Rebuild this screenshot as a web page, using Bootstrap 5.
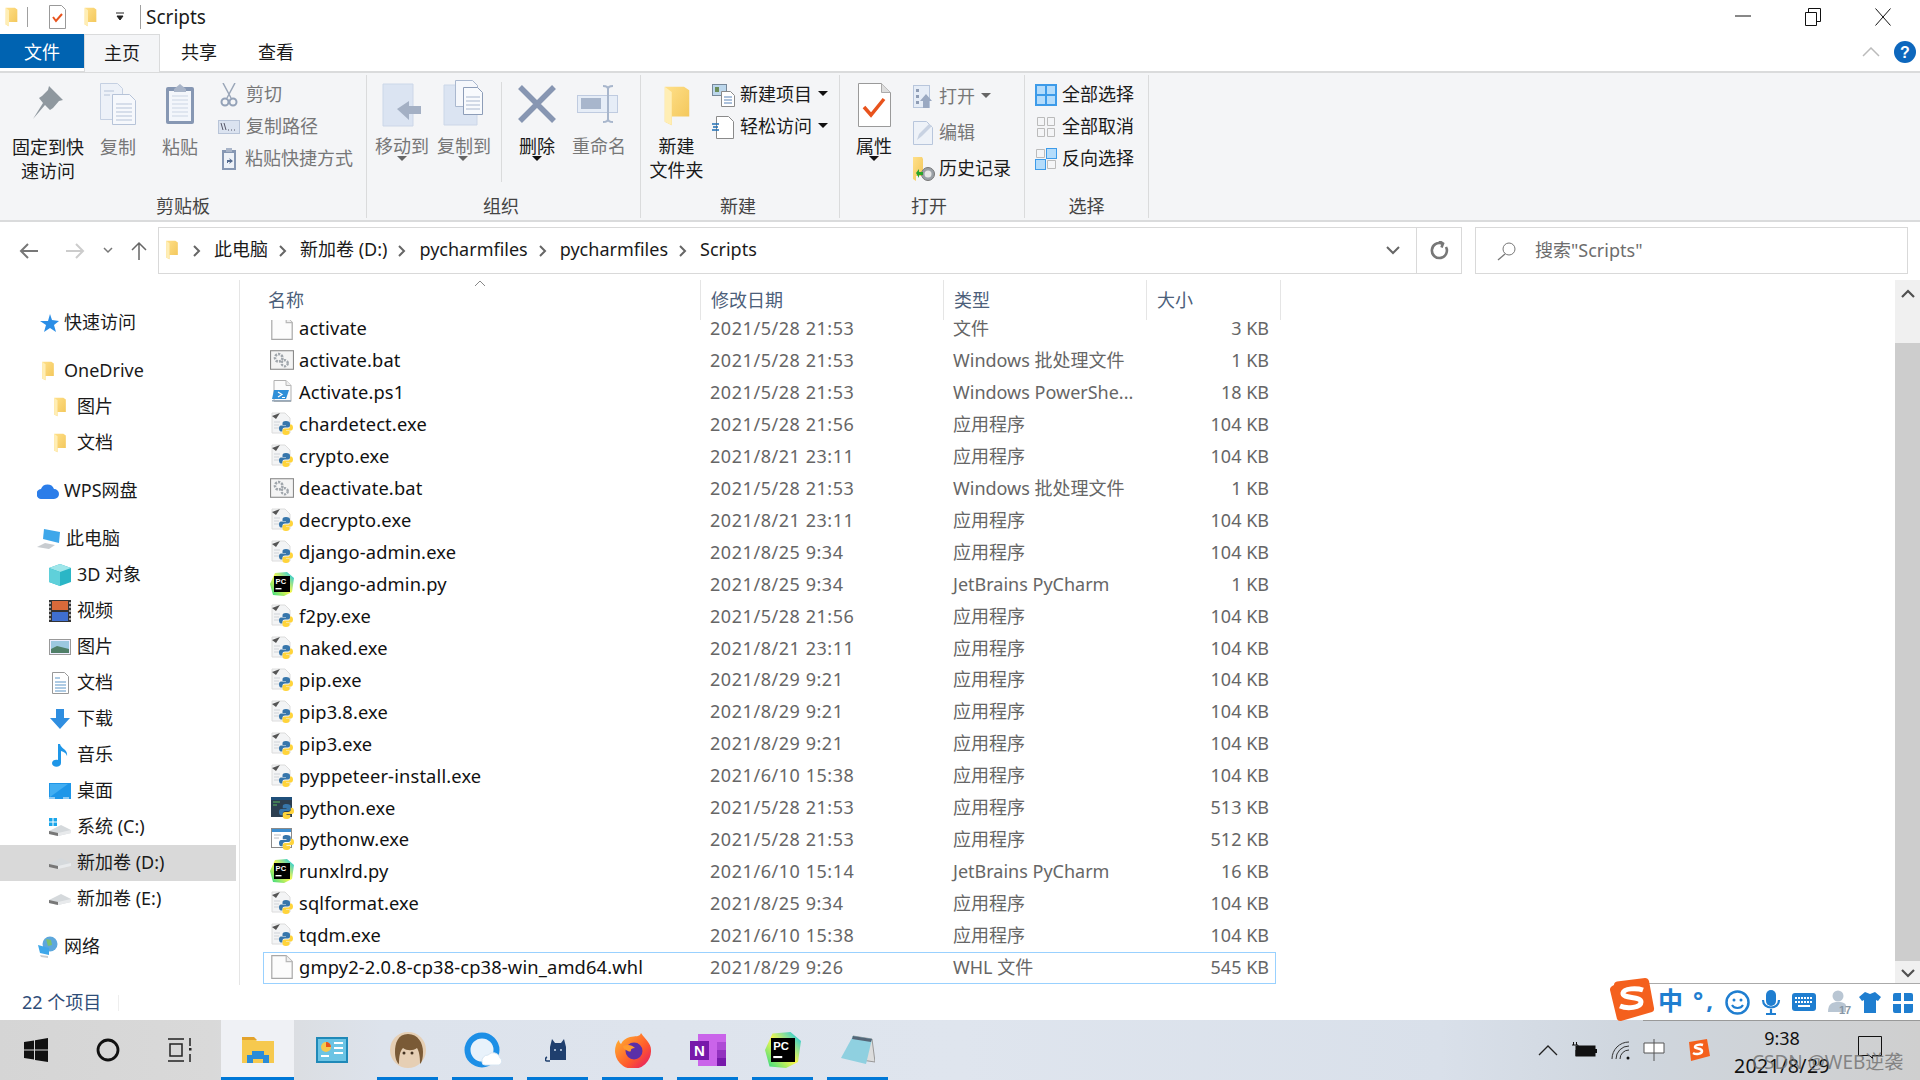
<!DOCTYPE html>
<html lang="zh-CN">
  <head>
    <meta charset="UTF-8" />
    <title>Scripts</title>
    <link href="https://cdn.jsdelivr.net/npm/bootstrap@5.3.0/dist/css/bootstrap.min.css" rel="stylesheet" />
    <style>
      html, body { height: 100%; }
      body {
        width: 1920px; height: 1080px; overflow: hidden; position: relative; background: #fff; color: #1a1a1a;
        font-family: "Noto Sans", "Noto Sans CJK SC", sans-serif; font-size: 18px; line-height: 1.2;
      }
      svg { display: block; flex: none; }
      .svg-defs { position: absolute; }
      /* title + tabs */
      .title-bar { height: 34px; }
      .title-text { font-size: 19px; margin-left: 5px; }
      .qa-sep { width: 1px; height: 20px; background: #a0a0a0; margin-left: 8px; }
      .qa-sep2 { height: 24px; margin-left: 15px; }
      .qa-check { margin-left: 21px; }
      .qa-folder { margin-left: 17px; }
      .qa-drop { margin-left: 17px; }
      .win-group { margin-right: 2px; }
      .win-btn { width: 70px; }
      .tab-strip { height: 37px; position: relative; z-index: 1; }
      .tab-item { width: 76px; height: 34px; line-height: 36px; text-align: center; }
      .tab-file { width: 84px; background: #0063b1; color: #fff; }
      .tab-home { height: 38px; background: #f4f5f7; border: 1px solid #dadbdc; border-bottom: 0; }
      .tab-share { width: 78px; }
      .tab-tools { height: 36px; margin-right: 4px; gap: 14px; }
      /* ribbon */
      .ribbon { height: 151px; background: #f4f5f7; border-top: 2px solid #dadbdc; border-bottom: 2px solid #dadbdc; padding-top: 2px; }
      .rb-group { height: 143px; border-right: 1px solid #dadbdc; flex: none; position: relative; }
      .rb-body { height: 120px; }
      .rb-label { height: 23px; text-align: center; color: #444; line-height: 22px; }
      .rb-big { flex: none; text-align: center; line-height: 24px; white-space: nowrap; }
      .rb-icon-box { height: 60px; padding-top: 8px; }
      .box-5 { padding-top: 5px; }
      .box-10 { padding-top: 10px; }
      .lbl-up { margin-top: -1px; }
      .rb-caret { width: 0; height: 0; margin: -2px auto 0; border: 5px solid transparent; border-top-color: #666; border-bottom: 0; }
      .rb-caret.is-dark { border-top-color: #111; }
      .caret-side { display: inline-block; margin: 0 0 4px 0; }
      .rb-col { display: flex; flex-direction: column; flex: none; margin-top: 4px; }
      .rb-small { height: 32px; display: flex; align-items: center; gap: 6px; white-space: nowrap; }
      .rb-tall { height: 36px; }
      .txt-off { color: #777; }
      .rb-vsep { width: 1px; height: 100px; background: #dadbdc; margin: 7px 0 0; flex: none; }
      .bw-96 { width: 96px; } .bw-44 { width: 44px; } .bw-80 { width: 80px; } .bw-70 { width: 70px; }
      .bw-52 { width: 52px; } .bw-71 { width: 71px; } .bw-68 { width: 68px; } .bw-12 { width: 12px; flex: none; }
      .grp-1 { width: 367px; } .grp-2 { width: 274px; } .grp-3 { width: 199px; } .grp-4 { width: 185px; } .grp-5 { width: 124px; }
      .lbl-new { width: 194px; } .lbl-open { width: 178px; } .lbl-org { padding-right: 5px; }
      .ms-5px { margin-left: 5px; } .ms-10px { margin-left: 10px; }
      .nudge-1 { margin-left: -1px; } .nudge-2 { margin-left: -2px; } .nudge-p2 { margin-left: 2px; }
      .ico-path { margin-left: -2px; }
      .ico-paste { margin: 0 2px 0 1px; }
      /* address */
      .addr-row { height: 58px; padding-top: 5px; }
      .addr-nav { width: 158px; height: 47px; flex: none; }
      .nav-back { margin-left: 19px; }
      .nav-fwd { margin-left: 26px; }
      .nav-drop { margin-left: 18px; }
      .nav-up { margin-left: 18px; }
      .addr-box { width: 1304px; height: 47px; border: 1px solid #d9d9d9; flex: none; }
      .addr-path { padding: 0 0 2px 6px; }
      .path-gap { width: 3px; flex: none; }
      .path-sep { margin: 2px 13px 0 11px; }
      .addr-end { width: 45px; height: 100%; border-left: 1px solid #d9d9d9; }
      .search-box { width: 433px; height: 47px; margin-left: 13px; border: 1px solid #d9d9d9; color: #6d6d6d; padding-left: 21px; flex: none; }
      .search-text { margin-left: 18px; }
      /* nav pane */
      .main-area { height: 705px; }
      .nav-pane { width: 240px; flex: none; border-right: 1px solid #e5e5e5; padding-top: 25px; }
      .nav-row { height: 36px; display: flex; align-items: center; width: 236px; white-space: nowrap; }
      .nav-top { padding-left: 37px; gap: 5px; margin-top: 12px; }
      .nav-top:first-child { margin-top: 0; }
      .nav-sub { padding-left: 49px; gap: 6px; }
      .nav-on { background: #d9d9d9; }
      .pad-fold { padding: 0 4px; }
      /* file list */
      .file-list { flex: 1 1 auto; padding-left: 23px; }
      .file-cols { display: grid; grid-template-columns: 437px 243px 203px 130px; width: 1013px; }
      .list-head { height: 40px; margin-bottom: -7px; background: #fff; position: relative; z-index: 1; color: #4c607a; width: 1018px; grid-template-columns: 437px 243px 203px 135px; }
      .head-cell { padding: 10px 0 0 10px; border-left: 1px solid #e5e5e5; }
      .head-cell:first-child { padding-left: 5px; border-left: 0; position: relative; }
      .head-cell:last-child { border-right: 1px solid #e5e5e5; }
      .sort-mark { position: absolute; left: 211px; top: 0; }
      .file-row { height: 31.95px; align-items: center; white-space: nowrap; }
      .file-name { display: flex; align-items: center; gap: 5px; padding: 0 0 1px 7px; font-size: 18.3px; letter-spacing: .15px; color: #111; }
      .file-date, .file-type, .file-size { color: #666; padding-left: 10px; }
      .file-date { letter-spacing: .55px; }
      .file-size { text-align: right; padding-right: 7px; }
      .file-on { box-shadow: inset 0 0 0 1px #99d1ff; }
      .scroll-bar { width: 25px; flex: none; background: #f0f0f0; }
      .scroll-up { height: 30px; padding-bottom: 3px; }
      .scroll-thumb { height: 618px; background: #cdcdcd; margin-top: 33px; }
      .scroll-down { height: 24px; }
      /* status */
      .status-bar { height: 35px; padding-left: 22px; color: #2f4d78; }
      .status-sep { width: 1px; height: 16px; background: #eee; margin-left: 17px; }
      /* taskbar */
      .task-bar { height: 60px; background: linear-gradient(90deg, #d5d5d5 0, #d9d9d9 11%, #dde3ec 20%, #dfe5ee 50%, #d9e0ea 75%, #cfd6de 85%, #cfcfcf 100%); }
      .task-item { height: 60px; flex: none; display: flex; align-items: center; justify-content: center; }
      .task-w72 { width: 72px; }
      .task-view { width: 77px; padding-right: 5px; }
      .task-w76 { width: 76px; }
      .task-app { width: 61px; margin-right: 14px; border-bottom: 3px solid #0078d7; padding-top: 3px; }
      .task-first { margin-left: 7px; }
      .task-active { width: 73px; background: #eff1f5; border-bottom: 3px solid #0078d7; padding-top: 3px; }
      .tray-group { margin-right: 16px; }
      .tray-36 { width: 36px; } .tray-38 { width: 38px; } .tray-28 { width: 28px; } .tray-60 { width: 60px; } .tray-68 { width: 68px; }
      .tray-bell { margin-bottom: 4px; }
      .tray-clock { width: 108px; text-align: center; white-space: nowrap; line-height: 1; color: #111; padding-top: 9px; display: block; }
      .clock-time { margin-bottom: 9px; }
      .clock-date { font-size: 19.5px; letter-spacing: .4px; }
      /* overlays */
      .ime-bar { position: absolute; left: 1643px; top: 983px; width: 277px; height: 38px; background: #fff; border-top: 1px solid #aaa; border-bottom: 1px solid #999; }
      .ime-logo { position: absolute; left: 1609px; top: 978px; }
      .ime-item { position: absolute; top: 6px; }
      .ime-zh { position: absolute; left: 15px; top: 1px; font-size: 25px; font-weight: 700; color: #1f7ed0; line-height: 1.2; }
      .ime-punct { position: absolute; left: 50px; top: 2px; font-size: 24px; font-weight: 700; color: #1f7ed0; line-height: 1.2; letter-spacing: 3px; }
      .ime-smile { left: 82px; } .ime-mic { left: 118px; }
      .ime-keys { left: 149px; top: 9px; } .ime-user { left: 184px; }
      .ime-shirt { left: 216px; top: 8px; } .ime-grid { left: 250px; top: 9px; }
      .water-mark { position: absolute; left: 1752px; top: 1051px; font-size: 19px; color: rgba(110,110,110,.8); white-space: nowrap; }
    </style>
  </head>
  <body>
    <svg class="svg-defs" width="0" height="0">
      <defs>
        <linearGradient id="fg" x1="0" y1="0" x2="1" y2="1"><stop offset="0" stop-color="#ffe08a"/><stop offset="1" stop-color="#f2c557"/></linearGradient>
        <symbol id="i-folder" viewBox="0 0 16 24"><path d="M1 1h11l3 2v15H5v5l-4-2z" fill="url(#fg)"/><path d="M1 1l4 3v19l-4-2z" fill="#ffeeb5"/></symbol>
        <symbol id="i-blank" viewBox="0 0 18 20"><path d="M.5.5h12l5 5v14H.5z" fill="#fcfcfc" stroke="#a8a8a8"/><path d="M12.5.5v5h5" fill="#eee" stroke="#b8b8b8"/></symbol>
        <symbol id="i-bat" viewBox="0 0 22 20"><rect x=".5" y="1.5" width="21" height="17" fill="#f4f4f4" stroke="#8a8a8a"/><circle cx="8" cy="8" r="3.4" fill="none" stroke="#a0a6ac" stroke-width="2.4" stroke-dasharray="2 1"/><circle cx="13.5" cy="13" r="2.8" fill="none" stroke="#a0a6ac" stroke-width="2.2" stroke-dasharray="2 1"/></symbol>
        <symbol id="i-ps" viewBox="0 0 22 24"><path d="M3 .5h12l5 5v16H3z" fill="#fbfbfb" stroke="#b0b0b0"/><path d="M15 .5v5h5" fill="#eee" stroke="#b8b8b8"/><path d="M3 10h15l-3 9H1z" fill="#2f8fd8"/><path d="M7 12l4 2.5L7 17M11 17.5h3" fill="none" stroke="#fff" stroke-width="1.2"/><path d="M1 20h19v1.500H1z" fill="#9ab"/></symbol>
        <symbol id="i-snake" viewBox="0 0 14 14"><path d="M7 0c-3 0-3.500 1-3.500 2.500V4H7v.6H2C.5 4.600 0 6 0 7.500S.6 10.500 2 10.500h1.500V8.800c0-1.400 1-2.300 2.500-2.300h3c1 0 2-.8 2-2V2.500C11 1 9.800 0 7 0z" fill="#3776ab"/><path d="M7 14c3 0 3.500-1 3.500-2.500V10H7v-.6h5c1.500 0 2-1.400 2-2.900S13.400 3.500 12 3.500h-1v1.700c0 1.400-1 2.300-2.500 2.300h-3c-1 0-2 .8-2 2v2C3.500 13 4.200 14 7 14z" fill="#ffd43b"/></symbol>
        <symbol id="i-pyexe" viewBox="0 0 24 24"><path d="M2 1h13l5 5v15H2z" fill="#f3f4f5" stroke="#dcdcdc"/><path d="M2 4l8-3-4 6z" fill="#555"/><path d="M4 10h6M4 13h5M4 16h5" stroke="#cfd3d8"/><use href="#i-snake" x="9" y="9" width="14" height="14"/></symbol>
        <symbol id="i-pycon" viewBox="0 0 24 24"><rect x="1" y="1" width="21" height="20" fill="#2c3e50"/><path d="M3 6h7M3 9h4" stroke="#5cb85c"/><rect x="1" y="1" width="21" height="3" fill="#1f4f7a"/><use href="#i-snake" x="9" y="8" width="15" height="15"/></symbol>
        <symbol id="i-pyw" viewBox="0 0 24 24"><rect x="1.500" y="1.500" width="20" height="19" fill="#fff" stroke="#8a8a8a"/><rect x="2" y="2" width="19" height="3" fill="#3d8fd1"/><path d="M4 8h7M4 11h5" stroke="#b8bcc2"/><use href="#i-snake" x="9" y="8" width="15" height="15"/></symbol>
        <linearGradient id="pcg" x1="0" y1="1" x2="1" y2="0"><stop offset="0" stop-color="#21d789"/><stop offset=".5" stop-color="#fcf84a"/><stop offset="1" stop-color="#07c3f2"/></linearGradient>
        <symbol id="i-pc" viewBox="0 0 24 24"><path d="M5 1l12-1 7 6-2 14-8 4-11-1-3-11z" fill="url(#pcg)"/><rect x="4" y="4" width="16" height="16" fill="#000"/><text x="5.500" y="12" font-family="Liberation Sans" font-weight="700" font-size="7.500" fill="#fff">PC</text><rect x="5.500" y="16" width="6" height="1.400" fill="#fff"/></symbol>
        <symbol id="i-drive" viewBox="0 0 22 12"><path d="M0 7l12-6 10 5v3L9 12l-9-2z" fill="#d5d9dc"/><path d="M0 7l9 2v3l-9-2z" fill="#777"/><path d="M9 9l13-3v3L9 12z" fill="#e8eaec"/></symbol>
      </defs>
    </svg>

    <div class="title-bar d-flex align-items-center">
      <svg class="ms-1" width="15" height="20"><use href="#i-folder"/></svg>
      <div class="qa-sep"></div>
      <svg class="qa-check" width="17" height="24" viewBox="0 0 17 24"><path d="M.5.5h12l4 4v19H.5z" fill="#fff" stroke="#999"/><path d="M4 12l3 4 6-7" fill="none" stroke="#e8531d" stroke-width="2"/></svg>
      <svg class="qa-folder" width="15" height="20"><use href="#i-folder"/></svg>
      <svg class="qa-drop" width="10" height="10" viewBox="0 0 10 10"><path d="M1 1h8M2 4h6l-3 4z" fill="#222" stroke="#222"/></svg>
      <div class="qa-sep qa-sep2"></div>
      <div class="title-text">Scripts</div>
      <div class="ms-auto d-flex win-group">
        <div class="win-btn d-flex justify-content-center"><svg width="16" height="16"><path d="M0 8h16" stroke="#111"/></svg></div>
        <div class="win-btn d-flex justify-content-center"><svg width="16" height="18"><path d="M.5 4.500h11v13H.5zM3.500 4V.5h12v13H12" fill="none" stroke="#111"/></svg></div>
        <div class="win-btn d-flex justify-content-center"><svg width="16" height="18"><path d="M.5.5l15 17M15.500.5l-15 17" stroke="#111"/></svg></div>
      </div>
    </div>

    <div class="tab-strip d-flex">
      <div class="tab-item tab-file">文件</div>
      <div class="tab-item tab-home">主页</div>
      <div class="tab-item tab-share">共享</div>
      <div class="tab-item">查看</div>
      <div class="ms-auto d-flex align-items-center tab-tools">
        <svg width="18" height="10"><path d="M1 9l8-8 8 8" fill="none" stroke="#bbb" stroke-width="1.500"/></svg>
        <svg width="22" height="22" viewBox="0 0 22 22"><circle cx="11" cy="11" r="11" fill="#0d67bd"/><text x="11" y="17" text-anchor="middle" font-family="Liberation Sans" font-weight="700" font-size="16" fill="#fff">?</text></svg>
      </div>
    </div>

    <div class="ribbon d-flex">
      <div class="rb-group grp-1">
        <div class="rb-body d-flex">
          <div class="rb-big bw-96">
            <div class="rb-icon-box"><svg class="mx-auto" width="36" height="38" viewBox="0 0 36 38"><path d="M19 3l14 14-4 1-6 7-3 2-5-5-12 14 10-16-4-5 3-2 6-6z" fill="#8f989f"/></svg></div>
            <div>固定到快<br />速访问</div>
          </div>
          <div class="rb-big txt-off bw-44">
            <div class="rb-icon-box"><svg class="mx-auto" width="36" height="42" viewBox="0 0 36 42"><path d="M.5.500h17l5 5v31H.5z" fill="#edf1f8" stroke="#c5d0e2"/><path d="M12.500 11.500h17l6 6v24h-23z" fill="#f6f8fc" stroke="#b6c3d8"/><path d="M16 21h16M16 25h16M16 29h16M16 33h16M16 37h16M4 8h10M4 12h6" stroke="#b6c3d8"/></svg></div>
            <div>复制</div>
          </div>
          <div class="rb-big txt-off bw-80">
            <div class="rb-icon-box"><svg class="mx-auto" width="30" height="42" viewBox="0 0 30 42"><rect x="1" y="4" width="28" height="37" rx="2" fill="#8697b3"/><rect x="4" y="8" width="22" height="30" fill="#f3f6fb"/><path d="M7 13h16M7 17h16M7 21h16M7 25h16M7 29h16M7 33h16" stroke="#cbd5e4"/><path d="M9 6l6-5 6 5v3H9z" fill="#a8b4c8"/></svg></div>
            <div>粘贴</div>
          </div>
          <div class="rb-col txt-off">
            <div class="rb-small"><svg width="18" height="24" viewBox="0 0 18 24"><path d="M3 0l8 15M15 0L7 15" stroke="#9aa6b8" stroke-width="1.500"/><circle cx="5" cy="19" r="3.500" fill="none" stroke="#94a2b8" stroke-width="2"/><circle cx="13" cy="19" r="3.500" fill="none" stroke="#94a2b8" stroke-width="2"/></svg><span class="nudge-p2">剪切</span></div>
            <div class="rb-small"><svg class="ico-path" width="22" height="16" viewBox="0 0 22 16"><rect x=".5" y="1.500" width="21" height="13" fill="#dbe3f0" stroke="#b8c4d8"/><path d="M3 4l2 7M6 4l2 7" stroke="#556"/><path d="M10 11h1M13 11h1M16 11h1" stroke="#556"/></svg><span>复制路径</span></div>
            <div class="rb-small"><svg class="ico-paste" width="16" height="24" viewBox="0 0 16 24"><rect x="1" y="3" width="14" height="20" fill="#8697b3"/><rect x="3" y="6" width="10" height="15" fill="#eef2f8"/><path d="M6 16v-3h3l-1-2 4 3-4 3 1-2H7v1z" fill="#556b8f"/><rect x="5" y="1" width="6" height="4" fill="#a8b4c8"/></svg><span>粘贴快捷方式</span></div>
          </div>
        </div>
        <div class="rb-label">剪贴板</div>
      </div>

      <div class="rb-group grp-2">
        <div class="rb-body d-flex">
          <div class="rb-big txt-off bw-70">
            <div class="rb-icon-box"><svg class="mx-auto" width="40" height="44" viewBox="0 0 40 44"><path d="M1 1h30v42H1z" fill="#dbe4f2" stroke="#ccd7e8"/><path d="M15 26l12-8v5h12v8H27v6z" fill="#a4b0c4"/></svg></div>
            <div class="lbl-up">移动到</div><div class="rb-caret"></div>
          </div>
          <div class="rb-big txt-off bw-52">
            <div class="rb-icon-box box-5"><svg class="mx-auto" width="40" height="46" viewBox="0 0 40 46"><path d="M1 5h33v40H1z" fill="#dbe4f2" stroke="#ccd7e8"/><path d="M12.500.5h17l5 5v21h-22z" fill="#f5f7fb" stroke="#aab8cf"/><path d="M20.500 7.500h14l5 5v22h-19z" fill="#f8fafd" stroke="#8d9db8"/><path d="M23 17h14M23 21h14M23 25h14M23 29h14" stroke="#aab8cf"/></svg></div>
            <div class="lbl-up">复制到</div><div class="rb-caret"></div>
          </div>
          <div class="bw-12"></div>
          <div class="rb-vsep"></div>
          <div class="rb-big bw-70">
            <div class="rb-icon-box box-10"><svg class="mx-auto" width="38" height="38" viewBox="0 0 38 38"><path d="M2 2l34 34M36 2L2 36" stroke="#8796b2" stroke-width="5.500"/></svg></div>
            <div class="lbl-up">删除</div><div class="rb-caret is-dark"></div>
          </div>
          <div class="rb-big txt-off bw-52">
            <div class="rb-icon-box box-10"><svg class="mx-auto" width="42" height="38" viewBox="0 0 42 38"><rect x=".5" y="10.500" width="40" height="17" fill="#e6edf7" stroke="#bfcbe0"/><rect x="4" y="13" width="20" height="11" fill="#a8b6cc"/><path d="M26 1c3 0 5 1 5 3v30c0 2 2 3 5 3M36 1c-3 0-5 1-5 3M26 37c3 0 5-1 5-3" fill="none" stroke="#a8b6cc" stroke-width="2"/></svg></div>
            <div class="lbl-up">重命名</div>
          </div>
        </div>
        <div class="rb-label lbl-org">组织</div>
      </div>

      <div class="rb-group grp-3">
        <div class="rb-body d-flex">
          <div class="rb-big bw-71">
            <div class="rb-icon-box box-10"><svg class="mx-auto" width="28" height="42"><use href="#i-folder"/></svg></div>
            <div class="lbl-up">新建<br />文件夹</div>
          </div>
          <div class="rb-col">
            <div class="rb-small"><svg width="23" height="23" viewBox="0 0 23 23"><rect x=".5" y=".5" width="14" height="11" fill="#bcd7ec" stroke="#789"/><rect x="3" y="3" width="4" height="5" fill="#6b8e5a"/><path d="M9.500 7.500h9l4 4v11h-13z" fill="#fff" stroke="#8a8a8a"/><path d="M12 13h8M12 16h8M12 19h8" stroke="#5a84b8"/></svg><span class="nudge-1">新建项目</span><span class="rb-caret is-dark caret-side"></span></div>
            <div class="rb-small"><svg width="22" height="23" viewBox="0 0 22 23"><path d="M4.500.5h12l5 5v17h-17z" fill="#fff" stroke="#8a8a8a"/><path d="M0 8h7M1 11h5M0 14h7" stroke="#1f6fb5" stroke-width="1.300"/></svg><span>轻松访问</span><span class="rb-caret is-dark caret-side"></span></div>
          </div>
        </div>
        <div class="rb-label lbl-new">新建</div>
      </div>

      <div class="rb-group grp-4">
        <div class="rb-body d-flex">
          <div class="rb-big bw-68">
            <div class="rb-icon-box"><svg class="mx-auto" width="33" height="44" viewBox="0 0 33 44"><path d="M.5.500h23l9 9v34H.5z" fill="#fff" stroke="#9a9a9a"/><path d="M23.500.5v9h9" fill="#ddd" stroke="#aaa"/><path d="M6 24l7 8 13-16" fill="none" stroke="#e8531d" stroke-width="3.500"/></svg></div>
            <div class="lbl-up">属性</div><div class="rb-caret is-dark"></div>
          </div>
          <div class="rb-col ms-5px">
            <div class="rb-small rb-tall txt-off"><svg width="20" height="24" viewBox="0 0 20 24"><rect x=".5" y=".5" width="16" height="22" fill="#e6edf7" stroke="#b8c6dc"/><path d="M3 4h3v3H3zM3 10h3v3H3zM3 16h3v3H3z" fill="#8f9db5"/><path d="M13 9l6 7h-3v7h-6v-7H7z" fill="#9aa9c2"/></svg><span>打开</span><span class="rb-caret caret-side"></span></div>
            <div class="rb-small rb-tall txt-off"><svg width="20" height="24" viewBox="0 0 20 24"><path d="M.5.500h13l6 6v17H.5z" fill="#eef2f8" stroke="#b8c6dc"/><path d="M4 19l2-6 10-10 3 2-10 10z" fill="#c8d2e2"/></svg><span>编辑</span></div>
            <div class="rb-small rb-tall"><svg width="22" height="24" viewBox="0 0 22 24"><path d="M0 0h9l1 2v17H3v5l-3-2z" fill="url(#fg)"/><circle cx="15" cy="17" r="6.500" fill="#9aa0a6" stroke="#777"/><circle cx="15" cy="17" r="3.500" fill="#e5e5e5"/><path d="M3 16l3-4v3h4v3H6v3z" fill="#2aa52a"/></svg><span class="nudge-2">历史记录</span></div>
          </div>
        </div>
        <div class="rb-label lbl-open">打开</div>
      </div>

      <div class="rb-group grp-5">
        <div class="rb-body d-flex">
          <div class="rb-col ms-10px">
            <div class="rb-small"><svg width="22" height="22" viewBox="0 0 22 22"><rect width="22" height="22" fill="#3d9be9"/><path d="M2 2h8v8H2zM12 2h8v8h-8zM2 12h8v8H2zM12 12h8v8h-8z" fill="#b4dcfb"/></svg><span class="nudge-1">全部选择</span></div>
            <div class="rb-small"><svg width="22" height="22" viewBox="0 0 22 22"><path d="M2.500 1.500h7v8h-7zM12.500 1.500h7v8h-7zM2.500 12.500h7v8h-7zM12.500 12.500h7v8h-7z" fill="#f4f5f7" stroke="#bbb"/></svg><span class="nudge-1">全部取消</span></div>
            <div class="rb-small"><svg width="22" height="22" viewBox="0 0 22 22"><path d="M11 0h11v11H11zM0 11h11v11H0z" fill="#3d9be9"/><path d="M12 1h9v9h-9zM1 12h9v9H1z" fill="#b4dcfb"/><path d="M1.500 1.500h8v8h-8zM12.500 12.500h8v8h-8z" fill="#f4f5f7" stroke="#bbb"/></svg><span class="nudge-1">反向选择</span></div>
          </div>
        </div>
        <div class="rb-label">选择</div>
      </div>
    </div>

    <div class="addr-row d-flex">
      <div class="addr-nav d-flex align-items-center">
        <svg class="nav-back" width="20" height="16" viewBox="0 0 20 16"><path d="M19 8H2M9 1L2 8l7 7" fill="none" stroke="#777" stroke-width="2"/></svg>
        <svg class="nav-fwd" width="20" height="16" viewBox="0 0 20 16"><path d="M1 8h17M11 1l7 7-7 7" fill="none" stroke="#ccc" stroke-width="2"/></svg>
        <svg class="nav-drop" width="10" height="8" viewBox="0 0 10 8"><path d="M1 1l4 4 4-4" fill="none" stroke="#777" stroke-width="1.500"/></svg>
        <svg class="nav-up" width="16" height="20" viewBox="0 0 16 20"><path d="M8 19V2M1 9l7-7 7 7" fill="none" stroke="#666" stroke-width="1.500"/></svg>
      </div>
      <div class="addr-box d-flex align-items-center">
        <div class="addr-path d-flex align-items-center flex-grow-1" id="addr-path"></div>
        <svg class="me-3" width="14" height="9" viewBox="0 0 14 9"><path d="M1 1l6 6 6-6" fill="none" stroke="#666" stroke-width="2"/></svg>
        <div class="addr-end d-flex align-items-center justify-content-center">
          <svg width="20" height="20" viewBox="0 0 20 20"><path d="M17 6a7.500 7.500 0 1 1-4-3.500M10 0l4 2.500-1.500 4" fill="none" stroke="#777" stroke-width="2.600"/></svg>
        </div>
      </div>
      <div class="search-box d-flex align-items-center">
        <svg width="20" height="20" viewBox="0 0 20 20"><circle cx="12" cy="8" r="6" fill="none" stroke="#777"/><path d="M8 13l-7 6" stroke="#777" stroke-width="1.300"/></svg>
        <span class="search-text">搜索"Scripts"</span>
      </div>
    </div>

    <div class="main-area d-flex">
      <div class="nav-pane" id="nav-pane"></div>
      <div class="file-list">
        <div class="file-cols list-head">
          <div class="head-cell">名称<svg class="sort-mark" width="12" height="7"><path d="M1 6l5-5 5 5" fill="none" stroke="#888"/></svg></div>
          <div class="head-cell">修改日期</div>
          <div class="head-cell">类型</div>
          <div class="head-cell">大小</div>
        </div>
        <div id="file-rows"></div>
      </div>
      <div class="scroll-bar d-flex flex-column">
        <div class="scroll-up d-flex justify-content-center align-items-center"><svg width="14" height="9" viewBox="0 0 14 9"><path d="M1 8l6-6 6 6" fill="none" stroke="#505050" stroke-width="2.200"/></svg></div>
        <div class="scroll-thumb"></div>
        <div class="scroll-down d-flex justify-content-center align-items-center"><svg width="14" height="9" viewBox="0 0 14 9"><path d="M1 1l6 6 6-6" fill="none" stroke="#505050" stroke-width="2.200"/></svg></div>
      </div>
    </div>

    <div class="status-bar d-flex align-items-center">22 个项目<div class="status-sep"></div></div>

    <div class="task-bar d-flex">
      <div class="task-item task-w72"><svg width="24" height="24" viewBox="0 0 24 24"><path d="M0 4l10-1.500V11.500H0zM11 2.300L24 0v11.500H11zM0 12.500h10v9L0 20zM11 12.500h13V24l-13-2z" fill="#111"/></svg></div>
      <div class="task-item task-w72"><svg width="24" height="24"><circle cx="12" cy="12" r="10" fill="none" stroke="#111" stroke-width="2.800"/></svg></div>
      <div class="task-item task-view"><svg width="24" height="24" viewBox="0 0 24 24"><path d="M0 1h16M2 6h12v12H2zM0 23h16M22 0v8M22 16v8" fill="none" stroke="#222" stroke-width="1.500"/><rect x="21" y="10" width="2.500" height="2.500" fill="#222"/></svg></div>
      <div class="task-item task-active"><svg width="32" height="26" viewBox="0 0 32 26"><path d="M0 1h12l3 3h17v22H0z" fill="#f6c94e"/><path d="M0 0h12l3 3H0z" fill="#e3a32b"/><path d="M5 26v-8h5v-4h12v4h5v8h-6v-4H11v4z" fill="#2a8cd8"/></svg></div>
      <div class="task-item task-w76"><svg width="32" height="26" viewBox="0 0 32 26"><rect width="32" height="26" fill="#1f89b8"/><rect x="2" y="2" width="28" height="22" fill="#6cc4e4"/><circle cx="10" cy="10" r="5" fill="#f6c94e"/><path d="M10 10V5a5 5 0 0 1 5 5z" fill="#e8531d"/><path d="M18 6h9M18 11h9M18 16h9M5 19h8" stroke="#fff" stroke-width="2"/></svg></div>
      <div class="task-item task-app task-first"><svg width="36" height="36" viewBox="0 0 36 36"><circle cx="18" cy="18" r="18" fill="#e6cfb4"/><path d="M18 2C8 2 5 11 5 20c0 6 2 11 4 12 0-8 1-13 4-16 4 3 10 3 14 0 2 3 3 8 3 16 2-2 3-6 3-12C33 11 28 2 18 2z" fill="#7a5a36"/><circle cx="14" cy="21" r="1.500" fill="#432"/><circle cx="22" cy="21" r="1.500" fill="#432"/></svg></div>
      <div class="task-item task-app"><svg width="38" height="36" viewBox="0 0 38 36"><circle cx="18" cy="18" r="14.500" fill="#e8f2fb" stroke="#1d8fe6" stroke-width="6"/><path d="M18 30a6 6 0 0 1 6-7 7 7 0 0 1 12 3 4 4 0 0 1-1 7H21a3 3 0 0 1-3-3z" fill="#fff" stroke="#d8e6f2"/></svg></div>
      <div class="task-item task-app"><svg width="26" height="26" viewBox="0 0 26 26"><path d="M7 2l3 4h6l3-4 2 8v13H5V10z" fill="#1f3f6e"/><circle cx="10" cy="13" r="1" fill="#cde"/><circle cx="16" cy="13" r="1" fill="#cde"/><path d="M5 24H2c-2 0-2-3 0-4" fill="none" stroke="#1f3f6e" stroke-width="1.500"/></svg></div>
      <div class="task-item task-app"><svg width="36" height="36" viewBox="0 0 36 36"><defs><linearGradient id="ffg" x1="0" y1="0" x2="1" y2="1"><stop offset="0" stop-color="#ffbd30"/><stop offset=".6" stop-color="#ff5a2c"/><stop offset="1" stop-color="#e0106e"/></linearGradient></defs><path d="M26 1c4 6 10 10 10 17a18 18 0 1 1-35-5c1-3 2-4 3-5 0 2 1 3 2 4 2-4 5-6 9-7 5-1 10 0 11-4z" fill="url(#ffg)"/><circle cx="19" cy="19" r="8.500" fill="#5b2fa8"/><path d="M8 14c5-2 9-1 12 2-3 0-4 1-4 2 0 3-3 1-5 0-2-1-3-2-3-4z" fill="#ff9a2e"/></svg></div>
      <div class="task-item task-app"><svg width="36" height="32" viewBox="0 0 36 32"><rect x="8" y="0" width="28" height="32" fill="#ca64ea"/><rect x="27" y="8" width="9" height="8" fill="#ae4bd5"/><rect x="27" y="16" width="9" height="8" fill="#9332bf"/><rect x="27" y="24" width="9" height="8" fill="#7719aa"/><rect x="0" y="7" width="19" height="19" fill="#7719aa"/><text x="9.500" y="22" text-anchor="middle" font-family="Liberation Sans" font-weight="700" font-size="15" fill="#fff">N</text></svg></div>
      <div class="task-item task-app"><svg width="36" height="36"><use href="#i-pc"/></svg></div>
      <div class="task-item task-app"><svg width="34" height="32" viewBox="0 0 34 32"><path d="M12 2l19 3 3 23-20-3z" fill="#ddd" stroke="#999"/><path d="M12 2l19 3-6 25L0 24z" fill="#8fd0e0"/><path d="M12 2l19 3-1 3-19-3z" fill="#567"/></svg></div>

      <div class="ms-auto d-flex tray-group">
        <div class="task-item tray-36"><svg width="20" height="11"><path d="M1 10l9-9 9 9" fill="none" stroke="#222" stroke-width="1.300"/></svg></div>
        <div class="task-item tray-36"><svg width="25" height="16" viewBox="0 0 25 16"><path d="M1.500 0v3M4.500 0v3M0 3h6v3l-2 2v6" fill="none" stroke="#111"/><rect x="4" y="4" width="19" height="10" fill="#111" stroke="#111"/><rect x="23" y="7" width="2" height="4" fill="#111"/></svg></div>
        <div class="task-item tray-38"><svg width="20" height="20" viewBox="0 0 20 20"><path d="M1 19A17 17 0 0 1 18 2M5 19A13 13 0 0 1 18 6M9 19a9 9 0 0 1 9-9" fill="none" stroke="#333"/><circle cx="17" cy="18" r="1.500" fill="#111"/></svg></div>
        <div class="task-item tray-28"><svg width="22" height="24" viewBox="0 0 22 24"><path d="M1 5h20v10H1zM11 1v22" fill="#fff" stroke="#555"/></svg></div>
        <div class="task-item tray-60"><svg width="24" height="22" viewBox="0 0 24 22"><path d="M3 3l18-3 3 17-19 5z" fill="#f4601d"/><path d="M17 6c-3-1-8 0-8 2s7 1 7 4-6 4-9 2" fill="none" stroke="#fff" stroke-width="2.500"/></svg></div>
        <div class="task-item tray-clock"><div class="clock-time">9:38</div><div class="clock-date">2021/8/29</div></div>
        <div class="task-item tray-68"><svg class="tray-bell" width="24" height="24"><path d="M.5.5h23v19h-9v3l-3-3H.5z" fill="none" stroke="#111"/></svg></div>
      </div>
    </div>

    <!-- input method bar and watermark sit on top of everything -->
    <div class="ime-bar">
      <span class="ime-zh">中</span>
      <span class="ime-punct">°,</span>
      <svg class="ime-item ime-smile" width="25" height="25" viewBox="0 0 25 25"><circle cx="12.500" cy="12.500" r="11" fill="none" stroke="#1f7ed0" stroke-width="2.500"/><circle cx="9" cy="10" r="1.500" fill="#1f7ed0"/><circle cx="16" cy="10" r="1.500" fill="#1f7ed0"/><path d="M7 15c2 4 9 4 11 0" fill="none" stroke="#1f7ed0" stroke-width="2"/></svg>
      <svg class="ime-item ime-mic" width="20" height="25" viewBox="0 0 20 25"><rect x="5" y="0" width="10" height="16" rx="5" fill="#1f7ed0"/><path d="M2 10c0 10 16 10 16 0M10 19v4M5 24h10" fill="none" stroke="#1f7ed0" stroke-width="2.200"/></svg>
      <svg class="ime-item ime-keys" width="24" height="18" viewBox="0 0 24 18"><rect width="24" height="18" rx="3" fill="#1f7ed0"/><path d="M3 5h18M3 9h18" stroke="#fff" stroke-width="2" stroke-dasharray="2 1"/><path d="M6 13h12" stroke="#fff" stroke-width="2"/></svg>
      <svg class="ime-item ime-user" width="26" height="25" viewBox="0 0 26 25"><circle cx="11" cy="6" r="5.500" fill="#b9c6d3"/><path d="M1 22c0-8 4-10 10-10s8 2 8 4v6z" fill="#b9c6d3"/><text x="12" y="24" font-family="Liberation Sans" font-weight="700" font-size="11" fill="#8796a5">17</text></svg>
      <svg class="ime-item ime-shirt" width="22" height="21" viewBox="0 0 22 21"><path d="M6 0l5 2 5-2 6 5-3 4-2-1v13H5V8L3 9 0 5z" fill="#1f7ed0"/></svg>
      <svg class="ime-item ime-grid" width="20" height="20" viewBox="0 0 20 20"><path d="M0 2a2 2 0 0 1 2-2h6v8H0zM11 0h7a2 2 0 0 1 2 2v6h-9zM0 11h8v9H2a2 2 0 0 1-2-2zM11 11h9v7a2 2 0 0 1-2 2h-7z" fill="#1f7ed0"/></svg>
    </div>
    <svg class="ime-logo" width="46" height="44" viewBox="0 0 46 44"><path d="M5 7Q5 4 8 3.500L36 0q3 0 4 3l5 27q.5 3-2 4L12 43q-3 .5-4-2L1 12q-.5-3 4-5z" fill="#f4601d"/><path d="M34 12c-6-2-19-2-20 3-1 6 18 3 18 9s-14 7-21 4" fill="none" stroke="#fff" stroke-width="5"/></svg>
    <div class="water-mark">CSDN @WEB逆袭</div>

    <script>
      // nav pane entries: [level, icon svg, label]
      const folder = '<svg width="14" height="20"><use href="#i-folder"/></svg>';
      const drive = '<svg width="22" height="12"><use href="#i-drive"/></svg>';
      const padded = '<span class="pad-fold">' + folder + "</span>";
      const navItems = [
        [0, '<svg width="22" height="18" viewBox="0 0 22 18"><path d="M13 0l2 6 7 1-5 4 2 7-6-4-6 4 2-7-6-4h8z" fill="#2b8ee6"/></svg>', "快速访问"],
        [0, padded, "OneDrive"],
        [1, padded, "图片"],
        [1, padded, "文档"],
        [0, '<svg width="22" height="16" viewBox="0 0 22 16"><path d="M5 16a5 5 0 0 1-1-10 7 7 0 0 1 13 0 5 5 0 0 1 0 10z" fill="#2b7de9"/></svg>', "WPS网盘"],
        [0, '<svg width="24" height="20" viewBox="0 0 24 20"><path d="M7 0l16 3-1 11L6 10z" fill="#3ea7ea"/><path d="M0 18l8-4 10 2-6 4z" fill="#c8ccd0"/></svg>', "此电脑"],
        [1, '<svg width="22" height="22" viewBox="0 0 22 22"><path d="M11 0l11 4v14l-11 4L0 18V4z" fill="#2ab6c6"/><path d="M0 4l11 4 11-4-11-4z" fill="#9fe6ea"/><path d="M11 8v14L0 18V4z" fill="#5fd0da"/></svg>', "3D 对象"],
        [1, '<svg width="22" height="22" viewBox="0 0 22 22"><rect width="22" height="22" fill="#333"/><rect x="3" y="1" width="16" height="9" fill="#d86a3a"/><rect x="3" y="12" width="16" height="9" fill="#3f6fd0"/><path d="M1 2v18M21 2v18" stroke="#ccc" stroke-width="1.500" stroke-dasharray="2 2"/></svg>', "视频"],
        [1, '<svg width="22" height="16" viewBox="0 0 22 16"><rect x=".5" y=".5" width="21" height="15" fill="#eef" stroke="#999"/><rect x="2" y="2" width="18" height="12" fill="#9cc8e0"/><path d="M2 10l6-3 12 3v4H2z" fill="#4f7f68"/></svg>', "图片"],
        [1, '<svg width="22" height="22" viewBox="0 0 22 22"><path d="M3.500.5h12l4 4v17h-16z" fill="#fff" stroke="#999"/><path d="M6 6h5M6 10h11M6 13h11M6 16h11M6 19h11" stroke="#5f97c8"/></svg>', "文档"],
        [1, '<svg width="22" height="20" viewBox="0 0 22 20"><path d="M7 0h8v9h6L11 20 1 9h6z" fill="#2f8ee0"/></svg>', "下载"],
        [1, '<svg width="22" height="24" viewBox="0 0 22 24"><path d="M9 1h2c1 5 8 5 7 12-1-3-3-4-6-5v12c0 5-9 5-9 0 0-3 4-4 6-3z" fill="#1e96e8"/></svg>', "音乐"],
        [1, '<svg width="22" height="16" viewBox="0 0 22 16"><rect width="22" height="16" fill="#1e96e8"/><path d="M1 14L19 1H1z" fill="#42aef2"/><path d="M0 15h22" stroke="#fff" stroke-dasharray="6 8"/></svg>', "桌面"],
        [1, '<svg width="22" height="18" viewBox="0 0 22 18"><path d="M0 0h3.500v3.500H0zM4.500 0H8v3.500H4.500zM0 4.500h3.500V8H0zM4.500 4.500H8V8H4.500z" fill="#19a5ea"/><use href="#i-drive" y="6" width="22" height="12"/></svg>', "系统 (C:)"],
        [1, drive, "新加卷 (D:)", true],
        [1, drive, "新加卷 (E:)"],
        [0, '<svg width="22" height="22" viewBox="0 0 22 22"><circle cx="13" cy="8" r="7.500" fill="#5da7dc"/><path d="M9 3l5 1 1 5-4 1z" fill="#7cc070"/><path d="M1 9l11 3v7L3 17z" fill="#3ea7ea"/><path d="M3 19l8 1v2l-7-1z" fill="#c8ccd0"/></svg>', "网络"],
      ];
      document.getElementById("nav-pane").innerHTML = navItems
        .map(
          ([level, icon, label, on]) =>
            `<div class="nav-row ${level ? "nav-sub" : "nav-top"} ${on ? "nav-on" : ""}">${icon}<span>${label}</span></div>`
        )
        .join("");

      // breadcrumb
      const crumbSep = '<svg class="path-sep" width="8" height="12" viewBox="0 0 8 12"><path d="M1 1l5 5-5 5" fill="none" stroke="#666" stroke-width="2"/></svg>';
      document.getElementById("addr-path").innerHTML =
        folder +
        '<span class="path-gap"></span>' +
        ["此电脑", "新加卷 (D:)", "pycharmfiles", "pycharmfiles", "Scripts"]
          .map((p) => crumbSep + `<span>${p}</span>`)
          .join("");

      // file rows: icon, name, date, type, size
      const EXE = "应用程序";
      const BAT = "Windows 批处理文件";
      const PC = "JetBrains PyCharm";
      const files = [
        ["blank", "activate", "2021/5/28 21:53", "文件", "3 KB"],
        ["bat", "activate.bat", "2021/5/28 21:53", BAT, "1 KB"],
        ["ps", "Activate.ps1", "2021/5/28 21:53", "Windows PowerShe...", "18 KB"],
        ["pyexe", "chardetect.exe", "2021/5/28 21:56", EXE, "104 KB"],
        ["pyexe", "crypto.exe", "2021/8/21 23:11", EXE, "104 KB"],
        ["bat", "deactivate.bat", "2021/5/28 21:53", BAT, "1 KB"],
        ["pyexe", "decrypto.exe", "2021/8/21 23:11", EXE, "104 KB"],
        ["pyexe", "django-admin.exe", "2021/8/25 9:34", EXE, "104 KB"],
        ["pc", "django-admin.py", "2021/8/25 9:34", PC, "1 KB"],
        ["pyexe", "f2py.exe", "2021/5/28 21:56", EXE, "104 KB"],
        ["pyexe", "naked.exe", "2021/8/21 23:11", EXE, "104 KB"],
        ["pyexe", "pip.exe", "2021/8/29 9:21", EXE, "104 KB"],
        ["pyexe", "pip3.8.exe", "2021/8/29 9:21", EXE, "104 KB"],
        ["pyexe", "pip3.exe", "2021/8/29 9:21", EXE, "104 KB"],
        ["pyexe", "pyppeteer-install.exe", "2021/6/10 15:38", EXE, "104 KB"],
        ["pycon", "python.exe", "2021/5/28 21:53", EXE, "513 KB"],
        ["pyw", "pythonw.exe", "2021/5/28 21:53", EXE, "512 KB"],
        ["pc", "runxlrd.py", "2021/6/10 15:14", PC, "16 KB"],
        ["pyexe", "sqlformat.exe", "2021/8/25 9:34", EXE, "104 KB"],
        ["pyexe", "tqdm.exe", "2021/6/10 15:38", EXE, "104 KB"],
        ["blank", "gmpy2-2.0.8-cp38-cp38-win_amd64.whl", "2021/8/29 9:26", "WHL 文件", "545 KB"],
      ];
      document.getElementById("file-rows").innerHTML = files
        .map(
          (f, i) => `
          <div class="file-cols file-row ${i === files.length - 1 ? "file-on" : ""}">
            <div class="file-name"><svg width="24" height="24"><use href="#i-${f[0]}"/></svg><span>${f[1]}</span></div>
            <div class="file-date">${f[2]}</div>
            <div class="file-type">${f[3]}</div>
            <div class="file-size">${f[4]}</div>
          </div>`
        )
        .join("");
    </script>
    <script src="https://cdn.jsdelivr.net/npm/bootstrap@5.3.0/dist/js/bootstrap.bundle.min.js"></script>
  </body>
</html>
